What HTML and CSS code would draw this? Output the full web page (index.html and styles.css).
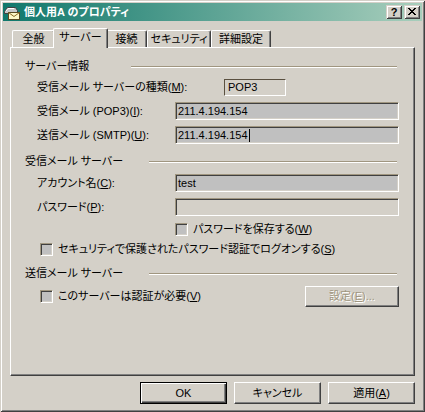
FILE: index.html
```html
<!DOCTYPE html>
<html lang="ja">
<head>
<meta charset="utf-8">
<title>個人用A のプロパティ</title>
<link rel="stylesheet" href="styles.css">
</head>
<body>
<div class="window">
  <div class="titlebar">
    <svg class="app-icon" width="16" height="16" viewBox="0 0 16 16">
      <path d="M0.5 7.5 L3.5 3.5 L11.5 3.5 L13.5 6.5 L13.5 9.5 L0.5 9.5 Z" fill="#c8c8c8" stroke="#404040"/>
      <path d="M2 7 L4 4.5 L10 4.5" fill="none" stroke="#ffffff"/>
      <rect x="4.5" y="8.5" width="11" height="7" fill="#fff8c8" stroke="#5a4a20"/>
      <path d="M4.5 8.5 L10 12.5 L15.5 8.5" fill="none" stroke="#8a6a20"/>
    </svg>
    <span class="title">個人用A のプロパティ</span>
    <div class="caption-buttons">
      <div class="cap-btn">?</div>
      <div class="cap-btn">
        <svg width="8" height="7" viewBox="0 0 8 7"><path d="M0 0h2v1H0zM6 0h2v1H6zM1 1h2v1H1zM5 1h2v1H5zM2 2h4v1H2zM3 3h2v1H3zM2 4h4v1H2zM1 5h2v1H1zM5 5h2v1H5zM0 6h2v1H0zM6 6h2v1H6z" fill="#000"/></svg>
      </div>
    </div>
  </div>
  <div class="client">
    <div class="tabs">
      <div class="tab w-general">全般</div>
      <div class="tab active w-server">サーバー</div>
      <div class="tab w-conn">接続</div>
      <div class="tab w-sec">セキュリティ</div>
      <div class="tab w-adv">詳細設定</div>
    </div>
    <div class="panel">
      <div class="group-head"><span class="txt">サーバー情報</span><i class="rule rule-a"></i></div>
      <div class="row gap5">
        <span class="label label-wide">受信メール サーバーの種類(<u>M</u>):</span>
        <div class="static">POP3</div>
      </div>
      <div class="row gap6">
        <span class="label">受信メール (POP3)(<u>I</u>):</span>
        <div class="field">211.4.194.154</div>
      </div>
      <div class="row gap6">
        <span class="label">送信メール (SMTP)(<u>U</u>):</span>
        <div class="field">211.4.194.154<span class="caret"></span></div>
      </div>

      <div class="group-head gap10"><span class="txt">受信メール サーバー</span><i class="rule rule-b"></i></div>
      <div class="row gap6">
        <span class="label">アカウント名(<u>C</u>):</span>
        <div class="field">test</div>
      </div>
      <div class="row gap6">
        <span class="label">パスワード(<u>P</u>):</span>
        <div class="field disabled"></div>
      </div>
      <div class="check-row indent-field gap7">
        <span class="check"></span><span class="check-label">パスワードを保存する(<u>W</u>)</span>
      </div>
      <div class="check-row indent-check gap7">
        <span class="check"></span><span class="check-label">セキュリティで保護されたパスワード認証でログオンする(<u>S</u>)</span>
      </div>

      <div class="group-head gap10"><span class="txt">送信メール サーバー</span><i class="rule rule-b"></i></div>
      <div class="auth-row gap6">
        <span class="check"></span><span class="check-label">このサーバーは認証が必要(<u>V</u>)</span>
        <div class="btn btn-settings is-disabled">設定(<u>E</u>)...</div>
      </div>
    </div>
    <div class="buttons">
      <div class="btn btn-main default">OK</div>
      <div class="btn btn-main">キャンセル</div>
      <div class="btn btn-main">適用(<u>A</u>)</div>
    </div>
  </div>
</div>
</body>
</html>
```
FILE: styles.css
```css
* { box-sizing: border-box; }

body {
  margin: 0;
  background: #d4d0c8;
  font-family: "Liberation Sans", "Noto Sans CJK JP", sans-serif;
  font-size: 11px;
  line-height: 13px;
  color: #000;
  font-feature-settings: "palt";
}

u { text-decoration: underline; text-underline-offset: 1px; }

.window {
  width: 425px;
  height: 412px;
  padding: 3px;
  background: #d4d0c8;
  box-shadow: inset 1px 1px 0 #d4d0c8, inset -1px -1px 0 #404040,
              inset 2px 2px 0 #ffffff, inset -2px -2px 0 #808080;
  display: flex;
  flex-direction: column;
}

/* title bar */
.titlebar {
  height: 18px;
  flex: none;
  display: flex;
  align-items: center;
  padding: 0 2px 0 1px;
  background: linear-gradient(to right, #10786c, #a8cebc);
}
.app-icon { flex: none; display: block; }
.title {
  flex: 1;
  margin-left: 4px;
  color: #fff;
  font-weight: bold;
  line-height: 18px;
  white-space: nowrap;
}
.caption-buttons { display: flex; gap: 2px; }
.cap-btn {
  width: 16px;
  height: 14px;
  background: #d4d0c8;
  box-shadow: inset 1px 1px 0 #d4d0c8, inset -1px -1px 0 #404040,
              inset 2px 2px 0 #ffffff, inset -2px -2px 0 #808080;
  display: flex;
  align-items: center;
  justify-content: center;
  font-family: "Liberation Sans", sans-serif;
  font-weight: bold;
  font-size: 11px;
  line-height: 12px;
  padding-bottom: 1px;
}

/* client area */
.client {
  flex: 1;
  display: flex;
  flex-direction: column;
  padding: 7px 7px 0;
}

.tabs {
  height: 19px;
  flex: none;
  display: flex;
  align-items: flex-end;
  padding-left: 2px;
}
.tab {
  height: 17px;
  border: 1px solid #fff;
  border-bottom: 0;
  border-right-color: #404040;
  border-radius: 2px 2px 0 0;
  box-shadow: inset -1px 0 0 #808080;
  display: flex;
  align-items: center;
  justify-content: center;
  white-space: nowrap;
  padding-top: 1px;
}
.tab.active {
  height: 20px;
  margin: 0 -2px -1px;
  position: relative;
  z-index: 1;
  background: #d4d0c8;
  padding: 0 0 3px;
}
.w-general { width: 43px; }
.w-server { width: 55px; }
.w-conn { width: 41px; }
.w-sec { width: 64px; }
.w-adv { width: 60px; }

.panel {
  height: 329px;
  flex: none;
  border: 1px solid;
  border-color: #fff #404040 #404040 #fff;
  box-shadow: inset -1px -1px 0 #808080;
  padding: 11px 15px 0 14px;
  display: flex;
  flex-direction: column;
}

.group-head {
  height: 14px;
  display: flex;
  align-items: center;
  white-space: nowrap;
}
.rule {
  align-self: flex-start;
  margin: 7px 2px 0 auto;
  height: 2px;
  border-top: 1px solid #a09680;
  border-bottom: 1px solid #fff;
}
.rule-a { width: 266px; }
.rule-b { width: 248px; }

.gap5 { margin-top: 5px; }
.gap6 { margin-top: 6px; }
.gap7 { margin-top: 7px; }
.gap10 { margin-top: 10px; }

.row {
  height: 18px;
  display: flex;
  align-items: center;
  padding-left: 12px;
}
.label { width: 138px; flex: none; white-space: nowrap; }
.label-wide { width: 187px; }

.static {
  width: 62px;
  height: 17px;
  border: 1px solid;
  border-color: #5a5040 #fff #fff #5a5040;
  padding-left: 3px;
  display: flex;
  align-items: center;
}

.field {
  flex: 1;
  height: 18px;
  background: #c0c0c0;
  border: 1px solid;
  border-color: #a09680 #fff #fff #a09680;
  box-shadow: inset 1px 1px 0 #404040, inset -1px -1px 0 #d4d0c8;
  padding-left: 2px;
  display: flex;
  align-items: center;
}
.field.disabled { background: #d4d0c8; }
.caret {
  display: inline-block;
  width: 1px;
  height: 13px;
  background: #000;
  margin-left: 1px;
}

.check-row {
  height: 13px;
  display: flex;
  align-items: center;
  white-space: nowrap;
}
.indent-field { padding-left: 150px; }
.indent-check { padding-left: 15px; }

.check {
  width: 13px;
  height: 13px;
  flex: none;
  background: #c0c0c0;
  border: 1px solid;
  border-color: #a09680 #fff #fff #a09680;
  box-shadow: inset 1px 1px 0 #404040, inset -1px -1px 0 #d4d0c8;
}
.check-label { margin-left: 5px; }

.auth-row {
  height: 21px;
  display: flex;
  align-items: center;
  padding-left: 15px;
  white-space: nowrap;
}

.btn {
  background: #d4d0c8;
  border: 1px solid;
  border-color: #fff #404040 #404040 #fff;
  box-shadow: inset -1px -1px 0 #808080;
  display: flex;
  align-items: center;
  justify-content: center;
  white-space: nowrap;
}
.btn-settings {
  margin-left: auto;
  width: 94px;
  height: 21px;
}
.is-disabled {
  color: #a09680;
  text-shadow: 1px 1px 0 #fff;
}

.buttons {
  display: flex;
  justify-content: flex-end;
  gap: 7px;
  margin-top: 6px;
}
.btn-main { width: 87px; height: 22px; }
.btn.default {
  border: 1px solid #000;
  box-shadow: inset 1px 1px 0 #fff, inset -1px -1px 0 #404040, inset -2px -2px 0 #808080;
}
```
